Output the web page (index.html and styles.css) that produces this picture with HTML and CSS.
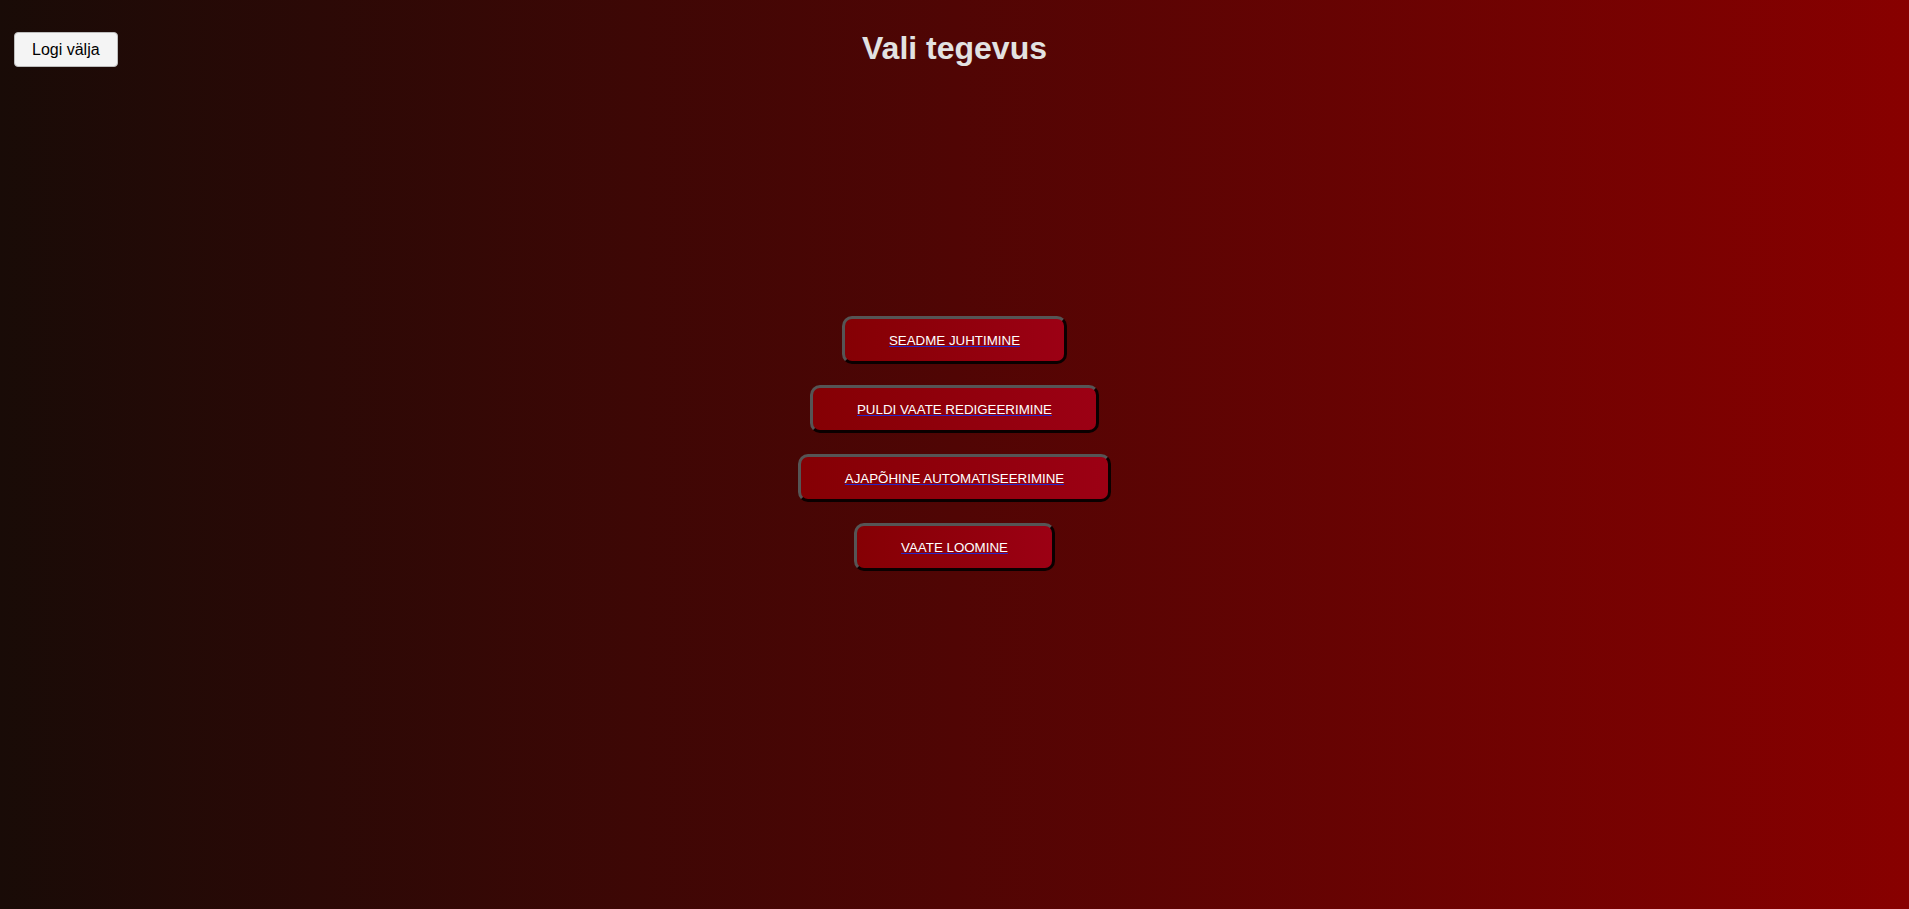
FILE: index.html
```html
<!DOCTYPE html>
<html lang="et">
<head>
<meta charset="utf-8">
<title>Vali tegevus</title>
<link rel="stylesheet" href="styles.css">
</head>
<body>
  <header class="header">
    <button class="logout">Logi välja</button>
    <h1 class="title">Vali tegevus</h1>
  </header>
  <main class="menu">
    <a class="menu-link" href="#"><span class="menu-btn"><span class="menu-text">SEADME JUHTIMINE</span></span></a>
    <a class="menu-link" href="#"><span class="menu-btn"><span class="menu-text">PULDI VAATE REDIGEERIMINE</span></span></a>
    <a class="menu-link" href="#"><span class="menu-btn"><span class="menu-text">AJAPÕHINE AUTOMATISEERIMINE</span></span></a>
    <a class="menu-link" href="#"><span class="menu-btn"><span class="menu-text">VAATE LOOMINE</span></span></a>
  </main>
</body>
</html>
```
FILE: styles.css
```css
html, body {
  margin: 0;
  padding: 0;
  height: 100%;
}

body {
  min-height: 100vh;
  background: linear-gradient(to right, #190b07 0%, #500504 50%, #880000 100%);
  font-family: "Liberation Sans", Arial, sans-serif;
  overflow: hidden;
}

.header {
  position: relative;
  padding-top: 30px;
  display: flex;
  justify-content: center;
}

.title {
  margin: 0;
  font-size: 32px;
  line-height: 37px;
  font-weight: bold;
  color: #e2e2e2;
}

.logout {
  position: absolute;
  left: 14px;
  top: 32px;
  height: 35px;
  padding: 0 17px;
  background: #f4f4f4;
  border: 1px solid #bdbdbd;
  border-radius: 4px;
  font-family: "Liberation Sans", Arial, sans-serif;
  font-size: 16px;
  color: #000;
  cursor: pointer;
}

.menu {
  display: flex;
  flex-direction: column;
  align-items: center;
  gap: 21px;
  padding-top: 249px;
}

.menu-link {
  display: block;
  color: #0000ee;
  text-decoration: none;
}

.menu-btn {
  display: flex;
  align-items: center;
  justify-content: center;
  box-sizing: border-box;
  height: 48px;
  padding: 0 44px;
  border: 3px solid;
  border-color: #555 #0a0000 #0a0000 #555;
  border-radius: 10px;
  background: linear-gradient(to right, #850004, #9c0014);
}

.menu-text {
  font-size: 13.333px;
  color: #fff;
  text-decoration: underline;
  text-decoration-color: #2626c8;
}
```
